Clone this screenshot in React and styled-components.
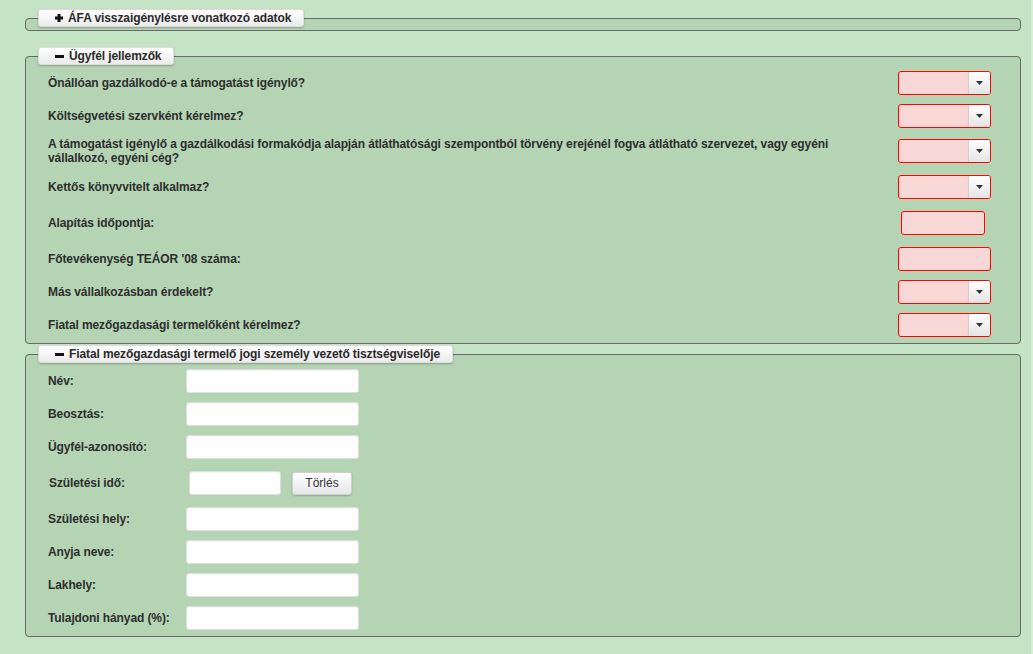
import React from "react";
import styled, { createGlobalStyle } from "styled-components";

const Global = createGlobalStyle`
  html, body { margin: 0; padding: 0; background: #c5e3c5; }
  body { font-family: "Liberation Sans", Arial, sans-serif; font-size: 12px; color: #333; }
`;

const Page = styled.div`
  box-sizing: border-box;
  width: 1033px;
  min-height: 654px;
  padding: 9px 0 0 25px;
  background: #c5e3c5;
  border-right: 2px solid #d9ecd9;
`;

const Fieldset = styled.fieldset`
  box-sizing: border-box;
  width: 996px;
  min-width: 0;
  margin: ${(p) => p.$mt || 0}px 0 0 0;
  padding: ${(p) => p.$pt || 0}px 12px ${(p) => p.$pb || 0}px 12px;
  border: 1px solid #6a6a6a;
  border-radius: 4px;
  background: #b4d4b4;
`;

const Legend = styled.legend`
  box-sizing: border-box;
  height: 18px;
  display: flex;
  align-items: center;
  gap: 5px;
  padding: 0 12px 0 16px;
  margin: 0;
  background: linear-gradient(#ffffff, #ebebeb);
  border: 1px solid #dcdcdc;
  border-radius: 3px;
  box-shadow: 0 1px 2px rgba(0, 0, 0, 0.25);
  font-weight: bold;
  font-size: 12px;
  letter-spacing: -0.1px;
  color: #2a2a2a;
  white-space: nowrap;
`;

const Row = styled.div`
  display: flex;
  align-items: center;
  height: ${(p) => p.$h}px;
`;

const PadRow = styled.div`
  display: flex;
  align-items: center;
  padding: ${(p) => (p.$tall ? "7px 0 8px 1px" : "4px 0 5px 0")};
`;

const Label = styled.div`
  box-sizing: border-box;
  width: ${(p) => p.$w}px;
  flex: none;
  padding: 0 10px;
  font-weight: bold;
  font-size: 12px;
  line-height: 14px;
  letter-spacing: -0.1px;
  color: #2e2e2e;
`;

const Cell = styled.div`
  display: flex;
  align-items: center;
  gap: 11px;
`;

const SelectBox = styled.div`
  box-sizing: border-box;
  width: 93px;
  height: 24px;
  display: flex;
  justify-content: flex-end;
  border: 1px solid #f00;
  border-radius: 3px;
  background: #f7d8d6;
  overflow: hidden;
`;

const SelectBtn = styled.div`
  width: 21px;
  height: 100%;
  display: flex;
  align-items: center;
  justify-content: center;
  background: linear-gradient(#ffffff, #e4e4e4);
  box-shadow: -1px 0 1px rgba(0, 0, 0, 0.08);
`;

const ErrInput = styled.div`
  box-sizing: border-box;
  width: ${(p) => p.$w}px;
  height: 24px;
  margin-left: ${(p) => p.$ml || 0}px;
  border: 1px solid #f00;
  border-radius: 3px;
  background: #f7d8d6;
`;

const TextInput = styled.div`
  box-sizing: border-box;
  width: ${(p) => p.$w}px;
  height: 24px;
  margin-left: ${(p) => p.$ml || 0}px;
  border: 1px solid #dedede;
  border-radius: 3px;
  background: #fff;
  box-shadow: inset 0 1px 1px rgba(0, 0, 0, 0.04);
`;

const Button = styled.button`
  box-sizing: border-box;
  width: 60px;
  height: 23px;
  padding: 0;
  font-family: "Liberation Sans", Arial, sans-serif;
  font-size: 12px;
  color: #333;
  background: linear-gradient(#ffffff, #e6e6e6);
  border: 1px solid #d0d0d0;
  border-radius: 3px;
  box-shadow: 0 1px 2px rgba(0, 0, 0, 0.2);
`;

const Plus = () => (
  <svg width="8" height="8" viewBox="0 0 8 8">
    <rect x="2.5" y="0" width="3" height="8" fill="#111" />
    <rect x="0" y="2.5" width="8" height="3" fill="#111" />
  </svg>
);

const Minus = () => (
  <svg width="9" height="3" viewBox="0 0 9 3">
    <rect x="0" y="0" width="9" height="3" fill="#111" />
  </svg>
);

const Caret = () => (
  <svg width="7" height="4" viewBox="0 0 7 4">
    <polygon points="0,0 7,0 3.5,4" fill="#333" />
  </svg>
);

const Select = () => (
  <SelectBox>
    <SelectBtn>
      <Caret />
    </SelectBtn>
  </SelectBox>
);

const clientRows = [
  { t: "Önállóan gazdálkodó-e a támogatást igénylő?", h: 34, c: "select" },
  { t: "Költségvetési szervként kérelmez?", h: 32, c: "select" },
  {
    t: "A támogatást igénylő a gazdálkodási formakódja alapján átláthatósági szempontból törvény erejénél fogva átlátható szervezet, vagy egyéni vállalkozó, egyéni cég?",
    h: 38,
    c: "select",
  },
  { t: "Kettős könyvvitelt alkalmaz?", h: 34, c: "select" },
  { t: "Alapítás időpontja:", h: 38, c: "date" },
  { t: "Főtevékenység TEÁOR '08 száma:", h: 34, c: "text" },
  { t: "Más vállalkozásban érdekelt?", h: 32, c: "select" },
  { t: "Fiatal mezőgazdasági termelőként kérelmez?", h: 34, c: "select" },
];

const personRows = [
  "Név:",
  "Beosztás:",
  "Ügyfél-azonosító:",
  "Születési idő:",
  "Születési hely:",
  "Anyja neve:",
  "Lakhely:",
  "Tulajdoni hányad (%):",
];

export default function App() {
  return (
    <>
      <Global />
      <Page>
        <Fieldset $pb={3}>
          <Legend>
            <Plus />
            ÁFA visszaigénylésre vonatkozó adatok
          </Legend>
        </Fieldset>

        <Fieldset $mt={16} $pt={1} $pb={1}>
          <Legend>
            <Minus />
            Ügyfél jellemzők
          </Legend>
          {clientRows.map((r) => (
            <Row key={r.t} $h={r.h}>
              <Label $w={860}>{r.t}</Label>
              <Cell>
                {r.c === "select" && <Select />}
                {r.c === "date" && <ErrInput $w={84} $ml={3} />}
                {r.c === "text" && <ErrInput $w={93} />}
              </Cell>
            </Row>
          ))}
        </Fieldset>

        <Fieldset $mt={1} $pt={2} $pb={1}>
          <Legend>
            <Minus />
            Fiatal mezőgazdasági termelő jogi személy vezető tisztségviselője
          </Legend>
          {personRows.map((t) =>
            t === "Születési idő:" ? (
              <PadRow key={t} $tall>
                <Label $w={148}>{t}</Label>
                <Cell>
                  <TextInput $w={92} $ml={2} />
                  <Button type="button">Törlés</Button>
                </Cell>
              </PadRow>
            ) : (
              <PadRow key={t}>
                <Label $w={148}>{t}</Label>
                <Cell>
                  <TextInput $w={173} />
                </Cell>
              </PadRow>
            )
          )}
        </Fieldset>
      </Page>
    </>
  );
}
